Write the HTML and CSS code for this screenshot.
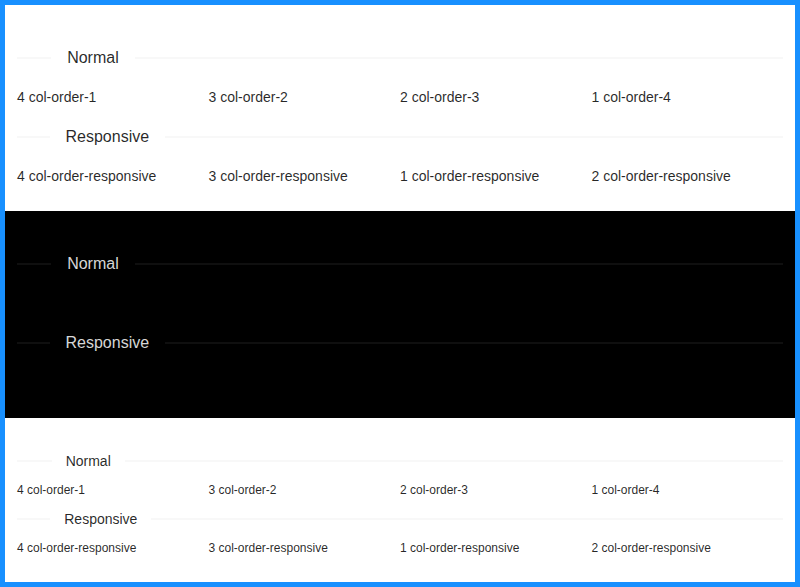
FILE: index.html
```html
<!DOCTYPE html>
<html>
<head>
<meta charset="utf-8">
<link rel="stylesheet" href="styles.css">
</head>
<body>
<div class="frame">
  <section class="panel">
    <div class="divider"><span class="divider-text">Normal</span></div>
    <div class="row">
      <div class="col">4 col-order-1</div>
      <div class="col">3 col-order-2</div>
      <div class="col">2 col-order-3</div>
      <div class="col">1 col-order-4</div>
    </div>
    <div class="divider"><span class="divider-text">Responsive</span></div>
    <div class="row">
      <div class="col">4 col-order-responsive</div>
      <div class="col">3 col-order-responsive</div>
      <div class="col">1 col-order-responsive</div>
      <div class="col">2 col-order-responsive</div>
    </div>
  </section>
  <section class="panel dark">
    <div class="divider"><span class="divider-text">Normal</span></div>
    <div class="row">
      <div class="col">4 col-order-1</div>
      <div class="col">3 col-order-2</div>
      <div class="col">2 col-order-3</div>
      <div class="col">1 col-order-4</div>
    </div>
    <div class="divider"><span class="divider-text">Responsive</span></div>
    <div class="row">
      <div class="col">4 col-order-responsive</div>
      <div class="col">3 col-order-responsive</div>
      <div class="col">1 col-order-responsive</div>
      <div class="col">2 col-order-responsive</div>
    </div>
  </section>
  <section class="panel small">
    <div class="divider"><span class="divider-text">Normal</span></div>
    <div class="row">
      <div class="col">4 col-order-1</div>
      <div class="col">3 col-order-2</div>
      <div class="col">2 col-order-3</div>
      <div class="col">1 col-order-4</div>
    </div>
    <div class="divider"><span class="divider-text">Responsive</span></div>
    <div class="row">
      <div class="col">4 col-order-responsive</div>
      <div class="col">3 col-order-responsive</div>
      <div class="col">1 col-order-responsive</div>
      <div class="col">2 col-order-responsive</div>
    </div>
  </section>
</div>
</body>
</html>
```
FILE: styles.css
```css
html, body {
  margin: 0;
  padding: 0;
}
body {
  font-family: "Liberation Sans", Arial, sans-serif;
  color: rgba(0, 0, 0, 0.85);
  font-size: 14px;
  line-height: 1.5715;
}
.frame {
  border: 5px solid #1890ff;
  height: 587px;
  box-sizing: border-box;
  overflow: hidden;
  background: #fff;
}
.panel {
  padding: 24px 12px;
  background: #fff;
}
.divider {
  display: flex;
  align-items: center;
  margin: 16px 0;
  font-size: 16px;
  line-height: 1.5715;
  white-space: nowrap;
  border-top-color: rgba(0, 0, 0, 0.06);
}
.divider::before,
.divider::after {
  content: "";
  position: relative;
  top: 50%;
  border-top: 1px solid;
  border-top-color: inherit;
  transform: translateY(50%);
  align-self: center;
}
.divider::before {
  width: 5%;
}
.divider::after {
  width: 95%;
}
.divider-text {
  display: inline-block;
  padding: 0 1em;
}
.row {
  display: grid;
  grid-template-columns: repeat(4, 1fr);
}
.dark {
  background: #000;
}
.dark .divider {
  color: rgba(255, 255, 255, 0.85);
  border-top-color: rgba(255, 255, 255, 0.12);
}
.dark .row {
  color: #000;
}
.small {
  font-size: 12px;
}
.small .divider {
  font-size: 14px;
  margin: 8px 0;
}
.small .row {
  line-height: 20px;
}
```
